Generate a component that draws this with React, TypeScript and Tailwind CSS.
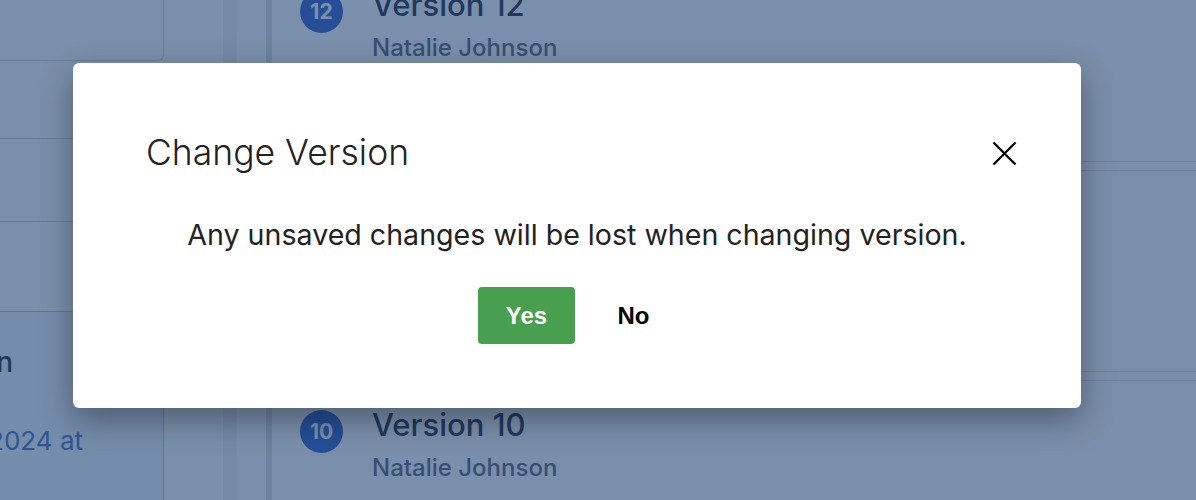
const versions = [
  { id: 12, author: 'Natalie Johnson' },
  { id: 11, author: 'Natalie Johnson' },
  { id: 10, author: 'Natalie Johnson' },
];

function VersionCard({ id, author }: { id: number; author: string }) {
  return (
    <div className="flex h-[202px] shrink-0 items-start gap-[29px] border-y border-[#d7dbe1] bg-white pl-[28px] pt-[25px]">
      <div className="mt-[4px] flex h-[43px] w-[43px] shrink-0 items-center justify-center rounded-full bg-[#4470d2] text-[21px] font-bold text-white">
        {id}
      </div>
      <div className="flex flex-col gap-[9px]">
        <span className="text-[31px] leading-[38px] font-medium text-[#374151]">Version {id}</span>
        <span className="text-[24px] leading-[30px] font-medium text-[#6b7280]">{author}</span>
      </div>
    </div>
  );
}

export default function App() {
  return (
    <div className="relative h-[500px] w-[1196px] overflow-hidden bg-white font-['Inter',sans-serif]">
      {/* page behind the dialog */}
      <div className="flex h-full">
        <div className="flex w-[164px] shrink-0 flex-col">
          <div className="h-[61px] rounded-br-md border-r border-b border-[#d1d5db]" />
          <div className="h-[78px] border-b border-[#d1d5db]" />
          <div className="h-[83px] border-b border-[#d1d5db]" />
          <div className="h-[90px] border-b border-[#b9cdf0]" />
          <div className="flex-1 border-r border-[#b9cdf0] bg-[#f4f8ff] pt-[32px]">
            <div className="flex w-[13px] justify-end whitespace-nowrap text-[28px] leading-[36px] font-medium text-[#374151]">
              Current Version
            </div>
            <div className="mt-[44px] flex w-[83px] justify-end whitespace-nowrap text-[26px] leading-[34px] text-[#5b7fc9]">
              Saved on March 14, 2024 at
            </div>
          </div>
        </div>
        <div className="flex w-[102px] shrink-0">
          <div className="w-[59px]" />
          <div className="w-[14px] bg-[#f1f3f6]" />
        </div>
        <div className="w-[6px] shrink-0 bg-[#dfe3e8]" />
        <div className="-mt-[40px] flex flex-1 flex-col gap-[8px]">
          {versions.map((v) => (
            <VersionCard key={v.id} {...v} />
          ))}
        </div>
      </div>

      {/* overlay + dialog */}
      <div className="absolute inset-0 flex items-start bg-[rgba(13,51,102,0.55)] pt-[63px] pl-[73px]">
        <div className="flex w-[1008px] flex-col rounded-[6px] bg-white pt-[70px] pr-[64px] pb-[64px] pl-[73px] shadow-[0_12px_32px_rgba(0,0,0,0.35)]">
          <div className="flex h-[40px] items-center justify-between">
            <h2 className="text-[35.5px] leading-[40px] font-light text-[#222]">Change Version</h2>
            <svg width="25" height="25" viewBox="0 0 25 25" className="text-black">
              <path d="M1.5 1.5 L23.5 23.5 M23.5 1.5 L1.5 23.5" stroke="currentColor" strokeWidth="2.3" />
            </svg>
          </div>
          <p className="mt-[44px] -ml-[9px] text-center text-[28.6px] leading-[36px] text-[#222]">
            Any unsaved changes will be lost when changing version.
          </p>
          <div className="mt-[34px] -ml-[3px] flex justify-center gap-[10px] font-['Liberation_Sans',Arial,sans-serif] text-[24px] font-bold">
            <button className="h-[57px] w-[97px] rounded-[4px] bg-[#489f50] text-white">Yes</button>
            <button className="h-[57px] w-[97px] text-black">No</button>
          </div>
        </div>
      </div>
    </div>
  );
}
